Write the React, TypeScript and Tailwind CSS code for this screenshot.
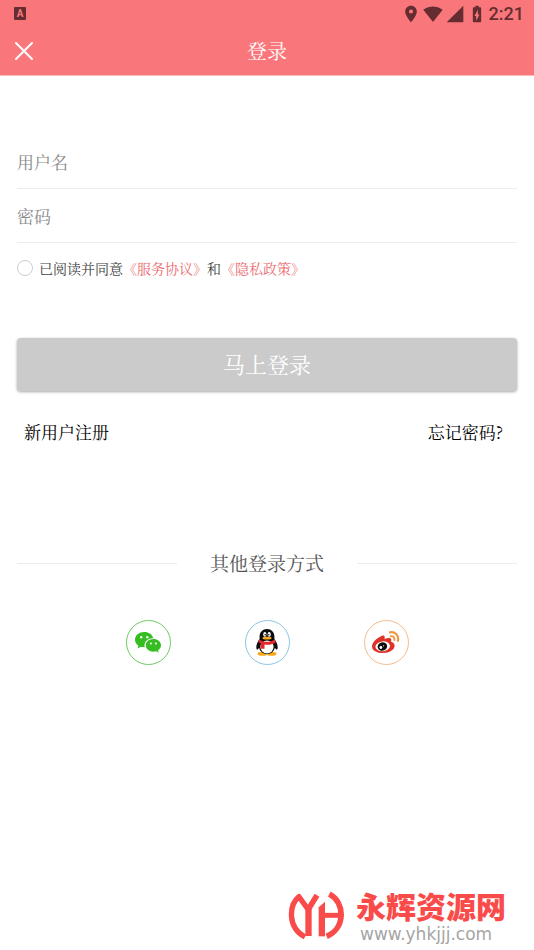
import { useState } from 'react';
import {
    MdBatteryChargingFull,
    MdLocationOn,
    MdSignalCellular4Bar,
    MdSignalWifi4Bar,
} from 'react-icons/md';

const fields = [
    { id: 'username', type: 'text', label: '用户名' },
    { id: 'password', type: 'password', label: '密码' },
];

function WechatIcon() {
    return (
        <svg viewBox="0 0 26 22" className="w-[26px] h-[22px]" aria-hidden="true">
            <path
                fill="#35bd22"
                d="M9.200 0C4.100 0 0 3.400 0 7.700c0 2.400 1.300 4.500 3.400 5.900l-.9 2.800 3.300-1.600c1 .3 2.200.5 3.400.5h.6a6.300 6.300 0 0 1-.3-1.900c0-4 3.800-7.100 8.300-7.100h.5C17.500 2.700 13.800 0 9.200 0Z"
            />
            <path
                fill="#35bd22"
                d="M26 13.300c0-3.600-3.500-6.300-7.600-6.300-4.300 0-7.700 2.800-7.700 6.300s3.400 6.400 7.700 6.400c.9 0 1.800-.2 2.700-.4l2.600 1.400-.7-2.300c1.800-1.200 3-3 3-5.100Z"
            />
            <g fill="#fff">
                <circle cx="6.2" cy="5.2" r="1.2" />
                <circle cx="12.3" cy="5.2" r="1.2" />
                <circle cx="15.9" cy="11.4" r="1" />
                <circle cx="20.9" cy="11.4" r="1" />
            </g>
        </svg>
    );
}

function QQIcon() {
    return (
        <svg viewBox="0 0 24 27" className="w-6 h-[27px]" aria-hidden="true">
            <ellipse cx="7.5" cy="24.7" rx="5" ry="2" fill="#f7a81b" />
            <ellipse cx="16.5" cy="24.7" rx="5" ry="2" fill="#f7a81b" />
            <path
                fill="#0b0b0d"
                d="M12 0C7.600 0 4.600 3.200 4.600 7.500v2.600C3 12.300 1.300 15.400 1.300 18c0 1.700.4 2.600.9 2.600.6 0 1.300-.8 1.900-1.900C4.900 22.400 8 25 12 25s7.100-2.600 7.900-6.300c.6 1.100 1.300 1.900 1.900 1.900.5 0 .9-.9.9-2.600 0-2.600-1.700-5.700-3.300-7.900V7.500C19.400 3.200 16.400 0 12 0Z"
            />
            <ellipse cx="12" cy="18" rx="6.6" ry="6.5" fill="#fff" />
            <ellipse cx="9.8" cy="5.4" rx="1.6" ry="2.3" fill="#fff" />
            <ellipse cx="14.2" cy="5.4" rx="1.6" ry="2.3" fill="#fff" />
            <circle cx="10.2" cy="5.7" r=".8" fill="#0b0b0d" />
            <circle cx="13.8" cy="5.7" r=".8" fill="#0b0b0d" />
            <ellipse cx="12" cy="9.2" rx="4.6" ry="1.4" fill="#f7a81b" />
            <path
                fill="#e5272d"
                d="M4.300 10.400c2.300 1.600 4.800 2.300 7.700 2.300s5.400-.7 7.700-2.300l1.100 3c-2.500 1.600-5.500 2.400-8.800 2.400-.9 0-1.700-.1-2.500-.2v4.200H5.700v-5.500c-.9-.3-1.700-.7-2.500-1.200Z"
            />
        </svg>
    );
}

function WeiboIcon() {
    return (
        <svg viewBox="0 0 28 23" className="w-7 h-[23px]" aria-hidden="true">
            <path
                fill="#dd3328"
                d="M9.500 5C4.600 7.100 0 11.500 0 15.400 0 19.500 5 22 10.900 22c6.800 0 11.700-3.300 11.700-7.200 0-2.300-1.700-3.500-3.700-4 .7-1.600.6-2.700-.3-3.300-1.300-.9-3.700-.3-6 .6C13.100 5.200 12.500 3.700 9.500 5Z"
            />
            <ellipse
                cx="10.7"
                cy="15.3"
                rx="7.3"
                ry="4.9"
                fill="#fff"
                transform="rotate(-6 10.7 15.3)"
            />
            <ellipse
                cx="10.4"
                cy="15.5"
                rx="4.8"
                ry="4.2"
                fill="#0d0d0d"
                transform="rotate(-15 10.4 15.5)"
            />
            <circle cx="8.9" cy="16.5" r="1.4" fill="#fff" />
            <circle cx="11.6" cy="14.8" r=".6" fill="#fff" />
            <g fill="none" stroke="#ee9a45" strokeLinecap="round">
                <path strokeWidth="2.2" d="M18 1.400c4.900-1 9.300 3.200 7.900 8.400" />
                <path strokeWidth="1.9" d="M18.700 5.200c2.400-.5 4.300 1.400 3.600 3.800" />
            </g>
        </svg>
    );
}

function SiteLogo() {
    return (
        <svg viewBox="24 30 168 150" className="w-14 h-[50px]" aria-hidden="true">
            <g fill="none" stroke="#fa4b4b">
                <path
                    strokeWidth="16"
                    strokeLinejoin="round"
                    d="M86 88 L57 47 C27 72 21 138 75 168"
                />
                <path strokeWidth="17" d="M111 43 L84 86" />
                <path strokeWidth="19" d="M85.5 78 V165" />
                <path strokeWidth="19" d="M125.5 78 V166" />
                <path strokeWidth="15" d="M124 103 H184" />
                <path strokeWidth="17" d="M148 39 C196 64 197 142 140 166" />
            </g>
            <path fill="#fa4b4b" d="M116 79 L135 62 V82 H116 Z" />
        </svg>
    );
}

const providers = [
    { id: 1, name: '微信', border: 'border-[#6fca63]', icon: <WechatIcon /> },
    { id: 2, name: 'QQ', border: 'border-[#8cc6e4]', icon: <QQIcon /> },
    { id: 3, name: '微博', border: 'border-[#f3bd8b]', icon: <WeiboIcon /> },
];

function StatusBar() {
    return (
        <div className="flex items-center justify-between h-[27px] pl-3.5 pr-2.5 text-[#652d31]">
            <span className="flex items-center justify-center w-3 h-[13px] rounded-[1px] bg-[#652d31] text-[#f9777b] font-['Roboto',sans-serif] text-[10px] leading-none font-bold">
                A
            </span>
            <div className="flex items-center gap-0.5">
                <MdLocationOn className="size-5" />
                <MdSignalWifi4Bar className="size-5" />
                <MdSignalCellular4Bar className="size-5" />
                <MdBatteryChargingFull className="size-5" />
                <span className="font-['Roboto',sans-serif] text-lg leading-none font-medium">
                    2:21
                </span>
            </div>
        </div>
    );
}

export default function App() {
    const [agreed, setAgreed] = useState(false);

    return (
        <div className="min-h-screen flex flex-col bg-white font-['Noto_Serif_CJK_SC','Noto_Sans_CJK_SC','Liberation_Serif',serif]">
            <header className="bg-[#f9777b] border-b border-[#fbb9bb]">
                <StatusBar />
                <div className="grid grid-cols-[1fr_auto_1fr] items-center h-12 px-3.5 text-white">
                    <button type="button" aria-label="关闭" className="justify-self-start">
                        <svg viewBox="0 0 20 20" className="size-5" aria-hidden="true">
                            <path
                                d="M2 2 18 18M18 2 2 18"
                                stroke="currentColor"
                                strokeWidth="2"
                                strokeLinecap="round"
                            />
                        </svg>
                    </button>
                    <h1 className="text-xl">登录</h1>
                </div>
            </header>

            <main className="px-[17px] pt-[59px]">
                <form onSubmit={(e) => e.preventDefault()}>
                    {fields.map((field) => (
                        <input
                            key={field.id}
                            id={field.id}
                            type={field.type}
                            aria-label={field.label}
                            placeholder={field.label}
                            className="block w-full h-[54px] border-b border-[#ececec] text-[17px] text-[#333] placeholder:text-[#888] outline-none"
                        />
                    ))}
                    <div className="flex items-center gap-1.5 mt-[15px] text-sm text-[#444]">
                        <input
                            id="agree"
                            type="checkbox"
                            checked={agreed}
                            onChange={(e) => setAgreed(e.target.checked)}
                            className="appearance-none size-4 shrink-0 rounded-full border border-[#ccc] checked:bg-[#f9777b]"
                        />
                        <p>
                            <label htmlFor="agree">已阅读并同意</label>
                            <a href="#service" className="text-[#ea6b6f]">
                                《服务协议》
                            </a>
                            和
                            <a href="#privacy" className="text-[#ea6b6f]">
                                《隐私政策》
                            </a>
                        </p>
                    </div>
                    <button
                        type="submit"
                        className="block w-full h-[53px] mt-[60px] pb-0.5 rounded-sm bg-[#cbcbcb] text-[22px] leading-8 text-white shadow-[0_1px_3px_rgba(0,0,0,0.35)]"
                    >
                        马上登录
                    </button>
                </form>

                <div className="flex justify-between mt-[29px] pl-[7px] pr-3.5 text-[17px] leading-6 text-black">
                    <a href="#register">新用户注册</a>
                    <a href="#forgot">忘记密码?</a>
                </div>

                <div className="flex items-center gap-[33px] mt-[105px]">
                    <div className="grow h-px bg-[#ececec]" />
                    <h2 className="text-[19px] leading-7 text-[#555]">其他登录方式</h2>
                    <div className="grow h-px bg-[#ececec]" />
                </div>

                <div className="flex justify-center gap-[74px] mt-[43px]">
                    {providers.map((provider) => (
                        <button
                            key={provider.id}
                            type="button"
                            aria-label={provider.name}
                            className={`flex items-center justify-center size-[45px] rounded-full border ${provider.border}`}
                        >
                            {provider.icon}
                        </button>
                    ))}
                </div>
            </main>

            <footer className="flex items-center justify-end gap-3 mt-auto pt-10 pr-7 pb-2">
                <SiteLogo />
                <div className="font-['DejaVu_Sans','Noto_Sans_CJK_SC',sans-serif]">
                    <p className="text-[30px] leading-9 font-black text-[#fa4b4b]">永辉资源网</p>
                    <p className="pl-1 text-[17px] leading-4 text-[#a5a5a5]">www.yhkjjj.com</p>
                </div>
            </footer>
        </div>
    );
}
